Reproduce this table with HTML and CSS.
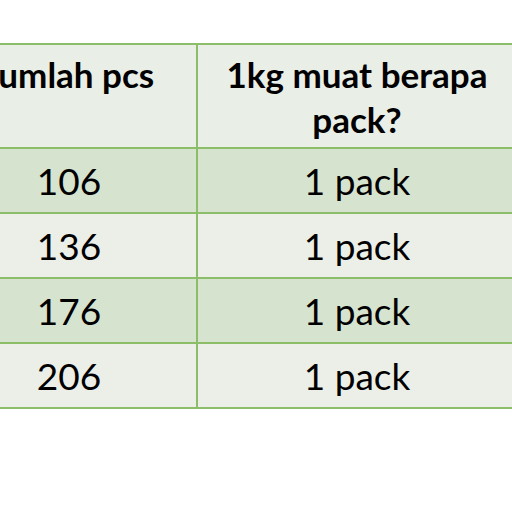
FILE: index.html
```html
<!DOCTYPE html>
<html>
<head>
<meta charset="utf-8">
<link rel="stylesheet" href="styles.css">
</head>
<body>
<div class="page">
  <table class="grid">
    <colgroup>
      <col class="c1">
      <col class="c2">
    </colgroup>
    <thead>
      <tr class="head">
        <th>Jumlah pcs</th>
        <th>1kg muat berapa pack?</th>
      </tr>
    </thead>
    <tbody>
      <tr class="odd"><td>106</td><td>1 pack</td></tr>
      <tr class="even"><td>136</td><td>1 pack</td></tr>
      <tr class="odd"><td>176</td><td>1 pack</td></tr>
      <tr class="even"><td>206</td><td>1 pack</td></tr>
    </tbody>
  </table>
</div>
</body>
</html>
```

FILE: styles.css
```css
html, body {
  margin: 0;
  padding: 0;
  background: #ffffff;
  overflow: hidden;
  width: 512px;
  height: 512px;
}
.page {
  padding-top: 43px;
  width: 512px;
  overflow: hidden;
}
.grid {
  border-collapse: collapse;
  margin-left: -60px;
  width: 576px;
  table-layout: fixed;
  font-family: Lato, "Open Sans", sans-serif;
  color: #000;
}
.c1 { width: 256px; }
.c2 { width: 320px; }
.grid th, .grid td {
  border: 2px solid #8cbd68;
  text-align: center;
  padding: 0;
}
.head th {
  background: #e9eee6;
  font-weight: 700;
  font-size: 35px;
  letter-spacing: 0;
  line-height: 45px;
  height: 95px;
  vertical-align: top;
  padding-top: 7px;
}
.grid td {
  height: 63px;
  font-size: 37px;
  font-weight: 400;
  vertical-align: middle;
}
.odd td { background: #d6e3cf; }
.even td { background: #ebefe8; }
```
